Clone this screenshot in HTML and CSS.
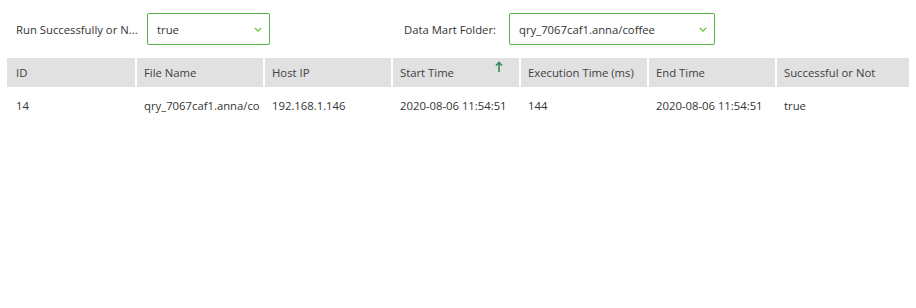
FILE: index.html
```html
<!DOCTYPE html>
<html>
<head>
<meta charset="utf-8">
<link rel="stylesheet" href="styles.css">
</head>
<body>
<div class="page">
  <div class="filters">
    <div class="field field-run">
      <span class="label label-run">Run Successfully or N...</span>
      <div class="select select-run"><span class="value">true</span><svg class="chev" viewBox="0 0 10 6" width="8" height="5"><path d="M1 1 L5 5 L9 1" fill="none" stroke="#52c41a" stroke-width="1.4"/></svg></div>
    </div>
    <div class="field field-folder">
      <span class="label label-folder">Data Mart Folder:</span>
      <div class="select select-folder"><span class="value">qry_7067caf1.anna/coffee</span><svg class="chev" viewBox="0 0 10 6" width="8" height="5"><path d="M1 1 L5 5 L9 1" fill="none" stroke="#52c41a" stroke-width="1.4"/></svg></div>
    </div>
  </div>
  <div class="table">
    <div class="th th-first">ID</div>
    <div class="th">File Name</div>
    <div class="th">Host IP</div>
    <div class="th th-sorted">Start Time<svg class="sort" viewBox="0 0 8 12" width="8" height="12"><path d="M4 11 V2 M1 4.5 L4 1.5 L7 4.5" fill="none" stroke="#2f8f5b" stroke-width="1.6"/></svg></div>
    <div class="th">Execution Time (ms)</div>
    <div class="th">End Time</div>
    <div class="th">Successful or Not</div>
    <div class="td td-first">14</div>
    <div class="td">qry_7067caf1.anna/co</div>
    <div class="td">192.168.1.146</div>
    <div class="td">2020-08-06 11:54:51</div>
    <div class="td">144</div>
    <div class="td">2020-08-06 11:54:51</div>
    <div class="td">true</div>
  </div>
</div>
</body>
</html>
```
FILE: styles.css
```css
html, body {
  margin: 0;
  padding: 0;
  background: #ffffff;
}
body {
  font-family: "Open Sans", "Noto Sans", "Liberation Sans", sans-serif;
  font-size: 11.3px;
  color: #333333;
}
.page {
  width: 916px;
  height: 308px;
}
.filters {
  display: flex;
  align-items: center;
  padding: 13px 0 0 16px;
  height: 32px;
}
.field {
  display: flex;
  align-items: center;
}
.field-folder {
  margin-left: 134px;
}
.label {
  white-space: nowrap;
  color: #333333;
}
.label-run {
  width: 131px;
}
.label-folder {
  width: 105px;
}
.select {
  box-sizing: border-box;
  height: 32px;
  border: 1px solid #52b043;
  border-radius: 2px;
  display: flex;
  align-items: center;
  justify-content: space-between;
  padding: 0 7px 0 9px;
  color: #333333;
}
.select .value {
  padding-top: 1px;
}
.select-run {
  width: 123px;
}
.select-folder {
  width: 206px;
}
.chev {
  display: block;
  margin-top: 1px;
}
.table {
  display: grid;
  grid-template-columns: 128px 126px 126px 126px 126px 126px 132px;
  column-gap: 2px;
  margin: 13px 0 0 7px;
  width: 902px;
}
.th {
  background: #e1e1e1;
  height: 29px;
  display: flex;
  align-items: center;
  padding: 0 7px;
  white-space: nowrap;
  overflow: hidden;
  color: #404040;
  position: relative;
}
.th-sorted .sort {
  position: absolute;
  right: 16px;
  top: 3px;
}
.td {
  height: 34px;
  display: flex;
  align-items: center;
  padding: 0 7px;
  white-space: nowrap;
  color: #333333;
  margin-top: 1px;
}
.th-first,
.td-first {
  padding-left: 9px;
}
```
